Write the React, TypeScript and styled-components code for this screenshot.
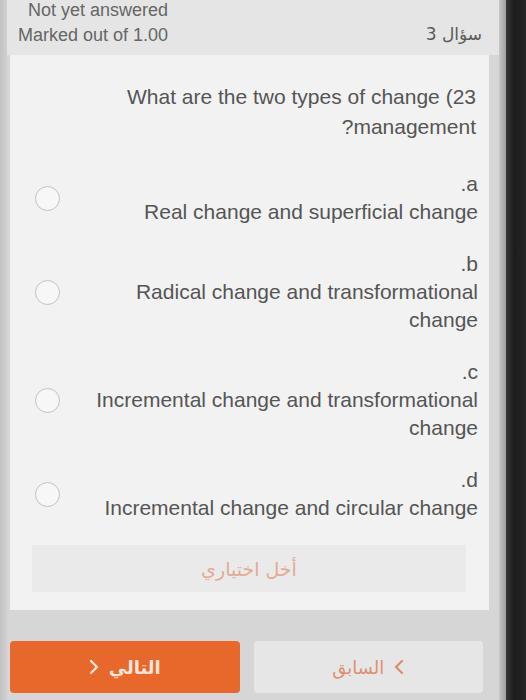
import styled, { createGlobalStyle } from 'styled-components';

const GlobalStyle = createGlobalStyle`
	html, body {
		margin: 0;
		padding: 0;
		background: #d4d4d4;
	}
	* {
		box-sizing: border-box;
	}
`;

type Option = {
	letter: string;
	lines: string;
};

const options: Option[] = [
	{ letter: '.a', lines: 'Real change and superficial change' },
	{ letter: '.b', lines: 'Radical change and transformational change' },
	{ letter: '.c', lines: 'Incremental change and transformational change' },
	{ letter: '.d', lines: 'Incremental change and circular change' }
];

const Page = styled.div`
	display: flex;
	width: 526px;
	height: 700px;
	overflow: hidden;
	font-family: 'Liberation Sans', Arial, sans-serif;
`;

const LeftEdge = styled.div`
	width: 7px;
	background: linear-gradient(90deg, #c2c2c2, #d0d0d0);
`;

const Screen = styled.div`
	flex: 1;
	display: flex;
	flex-direction: column;
	background: #d6d6d6;
`;

const RightFrame = styled.div`
	width: 7px;
	background: linear-gradient(90deg, #c8c8c8, #a0a0a0);
`;

const Bezel = styled.div`
	width: 20px;
	background: linear-gradient(90deg, #3a3a3a, #1c1c1c 40%, #262626);
`;

const Header = styled.header`
	height: 55px;
	display: flex;
	justify-content: space-between;
	align-items: flex-start;
	padding: 0 17px 0 11px;
	background: #e5e5e5;
`;

const Info = styled.div`
	text-align: right;
	color: #666;
	font-size: 18px;
	line-height: 25px;
	margin-top: -2px;
`;

const QuestionNo = styled.div`
	direction: rtl;
	margin-top: 24px;
	color: #5a5a5a;
	font-size: 17px;
	font-family: 'DejaVu Sans', sans-serif;
`;

const Card = styled.section`
	margin: 0 10px 0 3px;
	padding: 27px 11px 18px 12px;
	background: #f2f2f2;
	display: flex;
	flex-direction: column;
`;

const QuestionText = styled.div`
	text-align: right;
	color: #555;
	font-size: 21px;
	line-height: 30px;
	padding-right: 2px;
`;

const OptionList = styled.div`
	display: flex;
	flex-direction: column;
	gap: 24px;
	margin-top: 28px;
`;

const OptionRow = styled.label`
	display: flex;
	align-items: center;
	justify-content: space-between;
`;

const Radio = styled.span`
	width: 25px;
	height: 25px;
	margin-left: 13px;
	border-radius: 50%;
	border: 1.5px solid #c2c2c2;
	background: #f7f7f7;
	flex-shrink: 0;
`;

const OptionText = styled.div`
	max-width: 394px;
	text-align: right;
	color: #555;
	font-size: 21px;
	line-height: 28px;
`;

const ClearChoice = styled.div`
	margin: 23px 12px 0 10px;
	height: 47px;
	display: flex;
	align-items: center;
	justify-content: center;
	background: #eaeaea;
	color: #e3ab94;
	font-family: 'DejaVu Sans', sans-serif;
	font-size: 19px;
	direction: rtl;
`;

const Nav = styled.nav`
	display: flex;
	gap: 14px;
	margin: 31px 16px 0 3px;
`;

const NavButton = styled.button<{ $primary?: boolean }>`
	flex: 1;
	height: 52px;
	border: none;
	border-radius: 4px;
	display: flex;
	align-items: center;
	justify-content: center;
	gap: 10px;
	background: ${(props) => (props.$primary ? '#e8682b' : '#e6e6e6')};
	color: ${(props) => (props.$primary ? '#fbe6dc' : '#dc9072')};
	font-family: 'DejaVu Sans', sans-serif;
	font-size: 18px;
	font-weight: ${(props) => (props.$primary ? 700 : 400)};
	direction: ltr;
`;

const Chevron = ({ dir }: { dir: 'left' | 'right' }) => (
	<svg width="10" height="16" viewBox="0 0 10 16" fill="none">
		<path
			d={dir === 'right' ? 'M2 2l6 6-6 6' : 'M8 2L2 8l6 6'}
			stroke="currentColor"
			strokeWidth="2.4"
			strokeLinecap="round"
			strokeLinejoin="round"
		/>
	</svg>
);

const App = () => {
	return (
		<>
			<GlobalStyle />
			<Page>
				<LeftEdge />
				<Screen>
					<Header>
						<Info>
							<div>Not yet answered</div>
							<div>Marked out of 1.00</div>
						</Info>
						<QuestionNo>سؤال 3</QuestionNo>
					</Header>
					<Card>
						<QuestionText>
							What are the two types of change (23
							<br />
							?management
						</QuestionText>
						<OptionList>
							{options.map((option) => (
								<OptionRow key={option.letter}>
									<Radio />
									<OptionText>
										<div>{option.letter}</div>
										<div>{option.lines}</div>
									</OptionText>
								</OptionRow>
							))}
						</OptionList>
						<ClearChoice>أخل اختياري</ClearChoice>
					</Card>
					<Nav>
						<NavButton $primary>
							<Chevron dir="right" />
							<span>التالي</span>
						</NavButton>
						<NavButton>
							<span>السابق</span>
							<Chevron dir="left" />
						</NavButton>
					</Nav>
				</Screen>
				<RightFrame />
				<Bezel />
			</Page>
		</>
	);
};

export default App;
